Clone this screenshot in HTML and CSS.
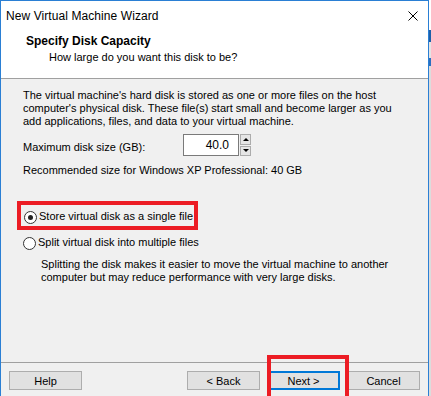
FILE: index.html
```html
<!DOCTYPE html>
<html lang="en">
  <head>
    <meta charset="UTF-8" />
    <title>New Virtual Machine Wizard</title>
    <link rel="stylesheet" href="styles.css">
  </head>
  <body>
    <div class="screen">
      <div class="window">
        <!-- Title bar -->
        <div class="titlebar">
          <span class="title">New Virtual Machine Wizard</span>
          <svg class="close" width="10" height="10" viewBox="0 0 10 10">
            <path d="M0.5 0.5 L9.5 9.5 M9.5 0.5 L0.5 9.5" stroke="#000" stroke-width="1" fill="none" />
          </svg>
        </div>

        <!-- Wizard header -->
        <div class="header">
          <h1>Specify Disk Capacity</h1>
          <p>How large do you want this disk to be?</p>
        </div>

        <!-- Page body -->
        <div class="content">
          <p class="intro">
            The virtual machine's hard disk is stored as one or more files on the host<br>
            computer's physical disk. These file(s) start small and become larger as you<br>
            add applications, files, and data to your virtual machine.
          </p>

          <div class="size-row">
            <span class="size-label">Maximum disk size (GB):</span>
            <div class="spin">
              <div class="spin-value">40.0</div>
              <div class="spin-btns">
                <span class="spin-btn"><i class="arrow-up"></i></span>
                <span class="spin-btn"><i class="arrow-down"></i></span>
              </div>
            </div>
          </div>

          <p class="recommend">Recommended size for Windows XP Professional: 40 GB</p>

          <div class="options">
            <label class="radio highlight"><span class="dot checked"></span>Store virtual disk as a single file</label>
            <label class="radio"><span class="dot"></span>Split virtual disk into multiple files</label>
            <p class="note">
              Splitting the disk makes it easier to move the virtual machine to another<br>
              computer but may reduce performance with very large disks.
            </p>
          </div>
        </div>

        <!-- Buttons -->
        <div class="footer">
          <button class="btn">Help</button>
          <span class="spacer"></span>
          <button class="btn">&lt; Back</button>
          <button class="btn primary">Next &gt;</button>
          <button class="btn">Cancel</button>
          <div class="callout"></div>
        </div>
      </div>
      <div class="edge"></div>
    </div>
  </body>
</html>
```

FILE: styles.css
```css
/* ============ Variables ============ */
:root {
  --accent: #2a7fd4;
  --face: #f0f0f0;
  --line: #a0a0a0;
  --btn: #e1e1e1;
  --btn-border: #adadad;
  --mark: #ec1c24;
}

/* ============ Base ============ */
html,
body {
  margin: 0;
  height: 100%;
  overflow: hidden;
  font-family: "Liberation Sans", Arial, sans-serif;
  font-size: 11px;
  color: #000;
  background: #d9d9d9;
}

.screen {
  display: flex;
  height: 396px;
}

.window {
  width: 429px;
  box-sizing: border-box;
  border: 1px solid var(--accent);
  border-bottom: none;
  background: var(--face);
  display: flex;
  flex-direction: column;
  overflow: hidden;
}

.edge {
  width: 2px;
  background: linear-gradient(#ffffff 0 30px, #1d5fa8 30px 42px, #e4e4e4 42px 58px, #2a6fc0 58px 66px, #dcdcdc 66px);
}

/* ============ Title bar ============ */
.titlebar {
  height: 30px;
  flex: 0 0 30px;
  display: flex;
  align-items: center;
  justify-content: space-between;
  padding: 0 10px 0 5px;
  background: #fff;
}
.title {
  font-size: 12px;
  letter-spacing: 0.08px;
  line-height: 30px;
}
.close {
  display: block;
}

/* ============ Header ============ */
.header {
  flex: 0 0 auto;
  background: #fff;
  padding: 2px 0 13px 25px;
  border-bottom: 1px solid var(--line);
}
.header h1 {
  margin: 0;
  font-size: 12px;
  font-weight: bold;
  line-height: 16px;
}
.header p {
  margin: 0 0 0 23px;
  line-height: 16px;
}

/* ============ Content ============ */
.content {
  flex: 1 1 auto;
  padding: 10px 0 0 22px;
}
.content p {
  margin: 0;
  line-height: 13px;
}

.size-row {
  display: flex;
  align-items: center;
  height: 22px;
  margin-top: 6px;
}
.size-label {
  width: 160px;
  padding-top: 3px;
}
.spin {
  display: flex;
  height: 22px;
}
.spin-value {
  width: 45px;
  padding-right: 9px;
  border: 1px solid #7a7a7a;
  background: #fff;
  text-align: right;
  font-size: 12px;
  line-height: 20px;
}
.spin-btns {
  display: flex;
  flex-direction: column;
  gap: 1px;
  padding-left: 1px;
}
.spin-btn {
  width: 9px;
  height: 9px;
  border: 1px solid #acacac;
  background: #e5e5e5;
  display: flex;
  align-items: center;
  justify-content: center;
}
.arrow-up,
.arrow-down {
  width: 0;
  height: 0;
  border-left: 3px solid transparent;
  border-right: 3px solid transparent;
}
.arrow-up {
  border-bottom: 3px solid #000;
}
.arrow-down {
  border-top: 3px solid #000;
}

.content .recommend {
  margin-top: 8px;
}

/* ============ Radio options ============ */
.options {
  margin-top: 24px;
}
.radio {
  display: flex;
  align-items: center;
  gap: 2px;
  line-height: 13px;
  white-space: nowrap;
}
.radio + .radio {
  margin-top: 6px;
}
.highlight {
  width: fit-content;
  margin-left: -6px;
  padding: 5px 1px 3px 3px;
  border: 4px solid var(--mark);
}
.dot {
  width: 11px;
  height: 11px;
  border: 1px solid #333;
  border-radius: 50%;
  background: #fff;
  position: relative;
  top: 1px;
  flex: 0 0 auto;
}
.dot.checked::after {
  content: "";
  position: absolute;
  left: 3px;
  top: 3px;
  width: 5px;
  height: 5px;
  border-radius: 50%;
  background: #222;
}
.content .note {
  margin: 9px 0 0 18px;
}

/* ============ Footer ============ */
.footer {
  position: relative;
  flex: 0 0 34px;
  box-sizing: border-box;
  display: flex;
  align-items: flex-start;
  gap: 7px;
  padding: 8px 8px 0 8px;
  border-top: 1px solid var(--line);
}
.spacer {
  flex: 1;
}
.btn {
  width: 73px;
  height: 19px;
  padding: 0;
  font-family: inherit;
  font-size: 11px;
  color: #000;
  background: var(--btn);
  border: 1px solid var(--btn-border);
}
.btn.primary {
  border: 2px solid #0078d7;
}
.callout {
  position: absolute;
  left: 266px;
  top: -8px;
  width: 82px;
  height: 50px;
  box-sizing: border-box;
  border: 4px solid var(--mark);
}
```
